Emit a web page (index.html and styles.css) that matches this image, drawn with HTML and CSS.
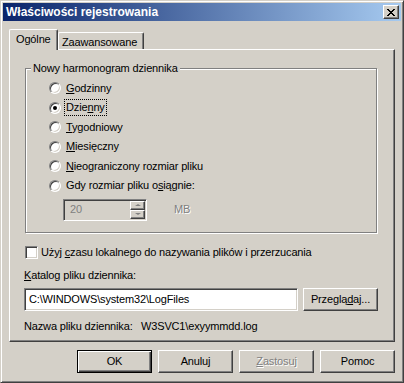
FILE: index.html
```html
<!DOCTYPE html>
<html>
<head>
<title>Właściwości rejestrowania</title>
<meta charset="utf-8">
<link rel="stylesheet" href="styles.css">
</head>
<body>
	<div class="window">
		<div class="titlebar">
			<span class="title">Właściwości rejestrowania</span>
			<span class="close">
				<svg width="8" height="7" viewBox="0 0 8 7"><path d="M0 0h2v1h1v1h2v-1h1v-1h2v1h-1v1h-1v1h-1v1h1v1h1v1h1v1h-2v-1h-1v-1h-2v1h-1v1h-2v-1h1v-1h1v-1h1v-1h-1v-1h-1v-1h-1z" fill="#000"/></svg>
			</span>
		</div>
		<div class="body">
			<div class="tabs">
				<div class="tab active">Ogólne</div>
				<div class="tab">Zaawansowane</div>
			</div>
			<div class="panel">
				<div class="group">
					<span class="legend">Nowy harmonogram dziennika</span>
					<div class="options">
						<div class="option"><span class="radio"></span><span><u>G</u>odzinny</span></div>
						<div class="option"><span class="radio checked"></span><span class="focus">Dzie<u>n</u>ny</span></div>
						<div class="option"><span class="radio"></span><span><u>T</u>ygodniowy</span></div>
						<div class="option"><span class="radio"></span><span><u>M</u>iesięczny</span></div>
						<div class="option"><span class="radio"></span><span><u>N</u>ieograniczony rozmiar pliku</span></div>
						<div class="option"><span class="radio"></span><span>Gdy rozmiar pliku o<u>s</u>iągnie:</span></div>
					</div>
					<div class="size-row">
						<div class="spin-edit">
							<span class="spin-value">20</span>
							<span class="spin-buttons">
								<span class="spin-btn up"></span>
								<span class="spin-btn down"></span>
							</span>
						</div>
						<span class="unit">MB</span>
					</div>
				</div>

				<div class="check-row">
					<span class="checkbox"></span>
					<span>Użyj <u>c</u>zasu lokalnego do nazywania plików i przerzucania</span>
				</div>

				<div class="field-label"><u>K</u>atalog pliku dziennika:</div>
				<div class="path-row">
					<div class="edit">C:\WINDOWS\system32\LogFiles</div>
					<button class="btn browse">Przeglą<u>d</u>aj...</button>
				</div>

				<div class="name-row">
					<span class="name-label">Nazwa pliku dziennika:</span>
					<span>W3SVC1\exyymmdd.log</span>
				</div>
			</div>

			<div class="buttons">
				<button class="btn default">OK</button>
				<button class="btn">Anuluj</button>
				<button class="btn disabled"><u>Z</u>astosuj</button>
				<button class="btn">Pomoc</button>
			</div>
		</div>
	</div>
</body>
</html>
```

FILE: styles.css
```css
body{margin: 0; background: #d4d0c8;}

.window {
	width: 404px;
	height: 383px;
	box-sizing: border-box;
	border: 1px solid;
	border-color: #d4d0c8 #404040 #404040 #d4d0c8;
	box-shadow: inset 1px 1px #fff, inset -1px -1px #808080;
	padding: 2px;
	background: #d4d0c8;
	font-family: "Liberation Sans", Arial, sans-serif;
	font-size: 11px;
	line-height: 13px;
	letter-spacing: -0.15px;
	color: #000;
}

u {
	text-decoration: underline;
	text-underline-offset: 1px;
}

/* 标题栏 */
.titlebar {
	height: 18px;
	display: flex;
	align-items: center;
	justify-content: space-between;
	padding: 0 2px 0 3px;
	background: linear-gradient(to right, #0a246a, #a6caf0);
}

.title {
	color: #fff;
	font-weight: bold;
	font-size: 12px;
	letter-spacing: 0;
}

.close {
	width: 16px;
	height: 14px;
	box-sizing: border-box;
	display: flex;
	align-items: center;
	justify-content: center;
	background: #d4d0c8;
	border: 1px solid;
	border-color: #fff #404040 #404040 #fff;
	box-shadow: inset -1px -1px #808080;
}

.body {
	padding: 8px 6px 0 6px;
}

/* 选项卡 */
.tabs {
	height: 20px;
	display: flex;
	align-items: flex-end;
}

.tab {
	box-sizing: border-box;
	height: 17px;
	padding: 3px 0 0 3px;
	border-top: 1px solid #fff;
	border-left: 1px solid #fff;
	border-right: 1px solid #404040;
	border-radius: 2px 2px 0 0;
	box-shadow: inset -1px 0 #808080;
	width: 86px;
}

.tab.active {
	width: 49px;
	height: 21px;
	margin-bottom: -1px;
	padding: 3px 0 0 6px;
	position: relative;
	z-index: 1;
	background: #d4d0c8;
}

.panel {
	box-sizing: border-box;
	height: 293px;
	border: 1px solid;
	border-color: #fff #404040 #404040 #fff;
	box-shadow: inset -1px -1px #808080;
	padding: 18px 0 0 14px;
}

/* 分组框 */
.group {
	position: relative;
	box-sizing: border-box;
	width: 352px;
	height: 165px;
	margin-left: 1px;
	border: 1px solid #808080;
	box-shadow: inset 1px 1px #fff, 1px 1px #fff;
	padding: 13px 0 0 23px;
}

.legend {
	position: absolute;
	top: -7px;
	left: 5px;
	padding: 0 2px;
	background: #d4d0c8;
}

.options {
	display: flex;
	flex-direction: column;
	gap: 7.6px;
}

.option {
	display: flex;
	align-items: center;
	height: 12px;
	gap: 5px;
}

.radio {
	width: 12px;
	height: 12px;
	box-sizing: border-box;
	border-radius: 50%;
	border: 1px solid;
	border-color: #808080 #fff #fff #808080;
	box-shadow: inset 1px 1px #404040, inset -1px -1px #d4d0c8;
	background: #fff;
	display: flex;
	align-items: center;
	justify-content: center;
}

.radio.checked::after {
	content: "";
	width: 4px;
	height: 4px;
	border-radius: 50%;
	background: #000;
}

.focus {
	outline: 1px dotted #000;
	outline-offset: 1px;
}

.size-row {
	display: flex;
	align-items: center;
	margin: 7px 0 0 14px;
}

.spin-edit {
	box-sizing: border-box;
	width: 84px;
	height: 22px;
	display: flex;
	align-items: center;
	justify-content: space-between;
	border: 1px solid;
	border-color: #808080 #fff #fff #808080;
	box-shadow: inset 1px 1px #404040, inset -1px -1px #d4d0c8;
	padding: 1px;
}

.spin-value {
	padding-left: 5px;
	color: #808080;
}

.spin-buttons {
	display: flex;
	flex-direction: column;
	width: 15px;
	height: 18px;
}

.spin-btn {
	flex: 1;
	box-sizing: border-box;
	border: 1px solid;
	border-color: #fff #404040 #404040 #fff;
	box-shadow: inset -1px -1px #808080;
	display: flex;
	align-items: center;
	justify-content: center;
}

.spin-btn::after {
	content: "";
	border-left: 3px solid transparent;
	border-right: 3px solid transparent;
}

.spin-btn.up::after {
	border-bottom: 2px solid #808080;
}

.spin-btn.down::after {
	border-top: 2px solid #808080;
}

.unit {
	margin-left: 27px;
	color: #808080;
	text-shadow: 1px 1px #fff;
}

.check-row {
	display: flex;
	align-items: center;
	height: 13px;
	gap: 3px;
	margin: 13px 0 0 1px;
}

.checkbox {
	width: 13px;
	height: 13px;
	box-sizing: border-box;
	border: 1px solid;
	border-color: #808080 #fff #fff #808080;
	box-shadow: inset 1px 1px #404040, inset -1px -1px #d4d0c8;
	background: #fff;
}

.field-label {
	margin-top: 10px;
}

.path-row {
	display: flex;
	gap: 5px;
	margin-top: 6px;
}

.edit {
	box-sizing: border-box;
	width: 274px;
	height: 23px;
	border: 1px solid;
	border-color: #808080 #fff #fff #808080;
	box-shadow: inset 1px 1px #404040, inset -1px -1px #d4d0c8;
	background: #fff;
	padding: 4px 0 0 4px;
	white-space: nowrap;
}

/* 按钮 */
.btn {
	box-sizing: border-box;
	width: 75px;
	height: 23px;
	padding: 0;
	font: inherit;
	letter-spacing: inherit;
	color: #000;
	background: #d4d0c8;
	border: 1px solid;
	border-color: #fff #404040 #404040 #fff;
	box-shadow: inset -1px -1px #808080;
}

.btn.default {
	border-color: #000;
	box-shadow: inset 1px 1px #fff, inset -1px -1px #404040, inset -2px -2px #808080;
}

.btn.disabled {
	color: #808080;
	text-shadow: 1px 1px #fff;
}

.name-row {
	display: flex;
	margin-top: 9px;
}

.name-label {
	width: 117px;
}

.buttons {
	display: flex;
	justify-content: flex-end;
	gap: 6px;
	margin-top: 8px;
}
```
